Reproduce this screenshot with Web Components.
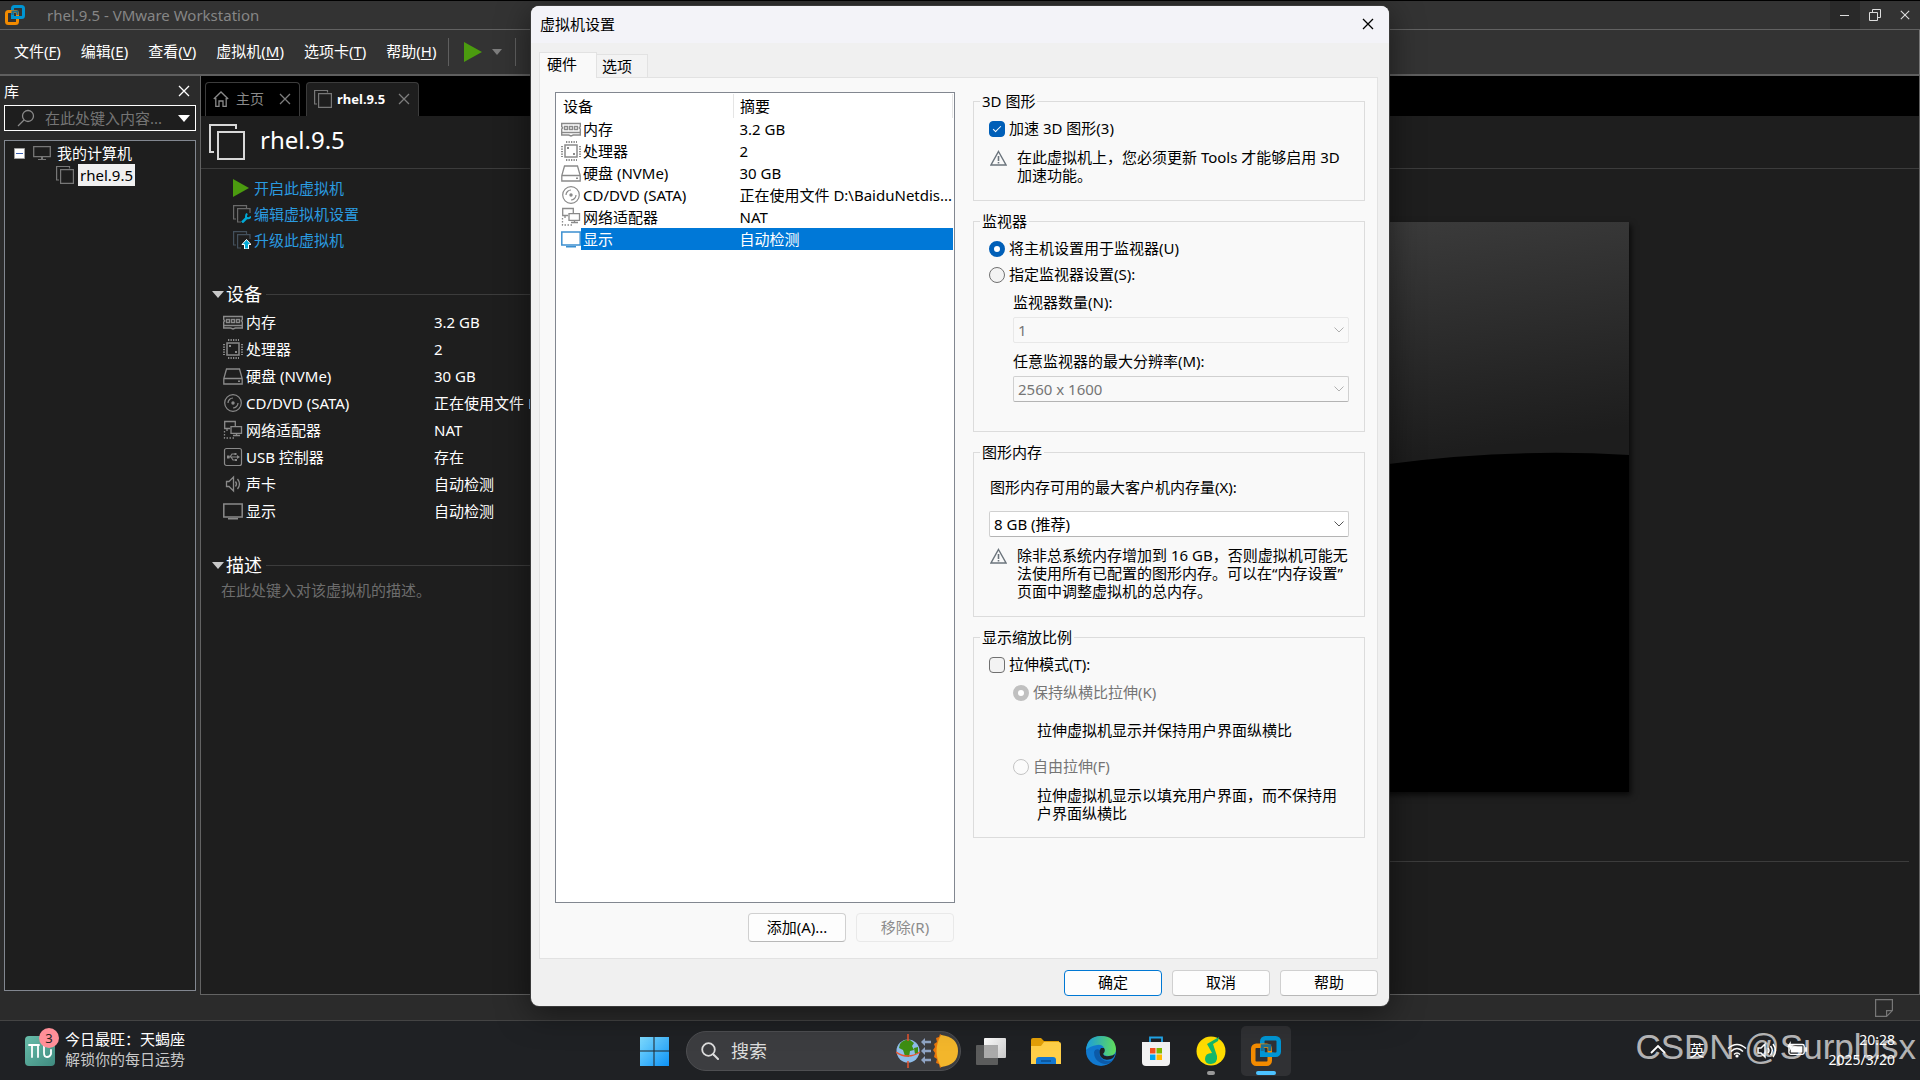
<!DOCTYPE html>
<html lang="zh-CN">
<head>
<meta charset="utf-8">
<title>rhel.9.5 - VMware Workstation</title>
<style>
    html, body {
        margin: 0;
        height: 100%;
    }
    body {
        background: #000;
        color: #fff;
        font: 15px/22px "Noto Sans", "Noto Sans CJK SC", sans-serif;
        overflow: hidden;
    }
</style>
</head>
<body>
<os-desktop>
    <wks-window slot="window"></wks-window>
    <settings-dialog slot="dialog"></settings-dialog>
    <os-taskbar slot="taskbar"></os-taskbar>
    <span slot="watermark">CSDN @Surplusx</span>
</os-desktop>

<script>
const define = (name, html) => {
    const template = document.createElement('template');
    template.innerHTML = html;
    customElements.define(name, class extends HTMLElement {
        constructor() {
            super();
            this.attachShadow({mode: 'open'}).appendChild(template.content.cloneNode(true));
        }
    });
};

// every icon is [viewBox, markup]
const icons = {
    logo: ['0 0 20 20', `<g fill="none" stroke-width="3">
        <rect x="7.5" y="1.5" width="11" height="11" rx="2" stroke="#0095d3"/>
        <rect x="1.5" y="6.5" width="11" height="12" rx="2" stroke="#f38b00"/>
        <path d="M7.500 9V12.500H15" stroke="#0095d3"/>
        <path d="M7.500 10V6.500H12.500V10" stroke="#1d6f93" stroke-width="2"/></g>`],
    memory: ['0 0 20 20', `<g fill="none" stroke="currentColor" stroke-width="1.400"><path d="M.7 4.500h18.600v3l-1 1.500 1 1v6h-7l-2.300 1-2.300-1h-7v-6l1-1-1-1.500z"/>
        <path d="M3.500 7.500h3v3h-3zM8.500 7.500h3v3h-3zM13.500 7.500h3v3h-3zM1 13.500h18"/></g>`],
    cpu: ['0 0 20 20', `<g fill="none" stroke="currentColor"><rect x="4" y="4" width="12" height="12" stroke-width="1.500"/>
        <path stroke-width="2" stroke-dasharray="1.300 1.200" d="M5 1h11M5 19h11M1 5v11M19 5v11"/></g><path fill="currentColor" d="M6 6h2v2H6zM12 12h2v2h-2z"/>`],
    disk: ['0 0 20 20', `<path fill="none" stroke="currentColor" stroke-width="1.300" d="M3.500 3h13l2.700 9.500V18H.8v-5.500zM1 12.500h18"/><path fill="currentColor" d="M15 14.500h2v1.500h-2z"/>`],
    disc: ['0 0 20 20', `<g fill="none" stroke="currentColor" stroke-width="1.200"><circle cx="10" cy="10" r="8.300"/>
        <path d="M5 10a5 5 0 0 1 5-5M15 10a5 5 0 0 1-5 5"/></g><circle cx="10" cy="10" r="1.700" fill="currentColor"/>`],
    network: ['0 0 20 20', `<g fill="none" stroke="currentColor" stroke-width="1.300"><path d="M7 8.500H1.700v-7h10.600V6M8 6.700h10.500v6.600H8zM10 15.500h7M13.500 13v3M4 8.500v2.500"/>
        <path stroke-dasharray="1.500 1.500" d="M1.500 11v7H12"/></g>`],
    usb: ['0 0 20 20', `<g fill="none" stroke="currentColor" stroke-width="1.200"><rect x="1.500" y="1.500" width="17" height="17" rx="2"/>
        <path d="M5 10h10M7 10l2-3h3M8 10l2 3h3"/></g><path fill="currentColor" d="M4 8.500h2.500v3H4zM14 8l3 2-3 2zM11.500 6h2v2h-2zM12 12h2v2h-2z"/>`],
    sound: ['0 0 20 20', `<path fill="none" stroke="currentColor" stroke-width="1.300" d="M3.500 7.500H6L10.500 3v14L6 12.500H3.500zM12.500 7.500q2 2.500 0 5M14.500 5q4 5 0 10"/>`],
    display: ['0 0 20 20', `<path fill="none" stroke="currentColor" stroke-width="1.500" d="M.8 3h18.400v13H.8z"/><path fill="currentColor" d="M5 17h10v1.500H5z"/>`],
    displayBlue: ['0 0 20 20', `<path fill="#fff" stroke="#3b8fd0" stroke-width="1.500" d="M.8 3h18.400v13H.8z"/><path fill="#3b8fd0" d="M5 17h10v1.500H5z"/>`],
    computer: ['0 0 18 18', `<path fill="none" stroke="currentColor" stroke-width="1.300" d="M.7 2.700h16.600v10H.7z"/><path fill="currentColor" d="M8 13h2v2h3v1H5v-1h3z"/>`],
    vm: ['0 0 18 18', `<path fill="none" stroke="currentColor" stroke-width="1.200" d="M13.500 2.500v-2H.6V14H3M4.600 3.600h12.800v13.800H4.600z"/>`],
    vmBig: ['0 0 36 36', `<path fill="none" stroke="#d8d8d8" stroke-width="2" d="M27 5V1H1v27h4M9 8h26v27H9z"/>`],
    vmEdit: ['0 0 18 18', `<path fill="none" stroke="#6a6a6a" stroke-width="1.200" d="M13.500 3V.6H.6V14H3M17 8V3.600H4.600V17H8"/>
        <path stroke="#00a9d6" stroke-width="2.500" d="m9 17.500 5-5"/><path fill="none" stroke="#00a9d6" stroke-width="2" d="M14 8.500q-2 3.500 0 4.500t4-1.500"/>`],
    vmUp: ['0 0 18 18', `<path fill="none" stroke="#43505c" stroke-width="1.200" d="M13.500 3V.6H.6V14H3M17 8V3.600H4.600V17H8"/>
        <path fill="#00a9d6" stroke="#fff" d="m13.500 8.500 4.500 5h-2.500V18h-4v-4.500H9z"/>`],
    play: ['0 0 18 20', `<path fill="#4b9b0f" d="M0 0l18 10L0 20z"/>`],
    down: ['0 0 12 7', `<path fill="currentColor" d="M0 0h12L6 7z"/>`],
    home: ['0 0 16 16', `<path fill="none" stroke="currentColor" stroke-width="1.300" d="M.8 8 8 1l7.200 7M2.800 7v8.300H6V10h4v5.300h3.200V7"/>`],
    close: ['0 0 12 12', `<path fill="none" stroke="currentColor" stroke-width="1.300" d="m1 1 10 10M11 1 1 11"/>`],
    minimize: ['0 0 12 12', `<path stroke="currentColor" d="M1 6.500h9"/>`],
    restore: ['0 0 12 12', `<path fill="none" stroke="currentColor" d="M3.500 3V.5h8v8H9M.5 3.500h8v8h-8z"/>`],
    search: ['0 0 18 18', `<circle cx="11" cy="7" r="5.500" fill="none" stroke="currentColor" stroke-width="1.300"/><path stroke="currentColor" stroke-width="1.300" d="M7 11l-6 6"/>`],
    searchWin: ['0 0 18 18', `<circle cx="7.500" cy="7.500" r="6.300" fill="none" stroke="currentColor" stroke-width="1.800"/><path stroke="currentColor" stroke-width="2" stroke-linecap="round" d="M12.500 12.500 17 17"/>`],
    minus: ['0 0 11 11', `<path fill="#fff" stroke="#a0a0a0" d="M.5.5h10v10H.5z"/><path stroke="#3a5fb0" d="M2 5.500h7"/>`],
    note: ['0 0 18 18', `<path fill="none" stroke="currentColor" stroke-width="1.200" d="M.6.6h16.800v11l-5.800 5.800H.6zM17 11.600h-5.400V17"/>`],
    warning: ['0 0 17 16', `<path fill="none" stroke="#6b747c" stroke-width="1.400" d="M8.500 1.500 16 15H1z"/><path fill="#6b747c" d="M7.700 6h1.600v5H7.700zM7.700 12h1.600v1.500H7.700z"/>`],
    chevron: ['0 0 10 6', `<path fill="none" stroke="currentColor" d="m.5.5 4.500 4.500L9.500.5"/>`],
    scorpio: ['0 0 30 30', `<defs><linearGradient id="s" x2="1" y2="1"><stop stop-color="#68bdaa"/><stop offset="1" stop-color="#3f8a7f"/></linearGradient></defs>
        <rect width="30" height="30" rx="4" fill="url(#s)"/><path fill="none" stroke="#fff" stroke-width="1.800" stroke-linecap="round" d="M4 9h10M7 9v12M13 9v12M19 10v7q0 4 3 4t4-3v-4"/>`],
    start: ['0 0 30 30', `<defs><linearGradient id="w" x2="1" y2="1"><stop stop-color="#7fdcff"/><stop offset="1" stop-color="#0d92f5"/></linearGradient></defs>
        <path fill="url(#w)" d="M1 1h13.500v13.500H1zM15.500 1H30v13.500H15.500zM1 15.500h13.500V30H1zM15.500 15.500H30V30H15.500z"/>`],
    globe: ['0 0 64 34', `<circle cx="12" cy="17" r="11.500" fill="#8fbdea"/><path fill="#3e8e12" d="M4 10Q8 5 14 6l4 3-2 3 2 4-4 1-1 6-4-1-2-6-4-2zM18 14l4-1v6l-3 1z"/>
        <path fill="none" stroke="#e8542f" stroke-width="1.500" d="M12 0v7M12 27v7M0 18q12 8 24 0"/><path stroke="#8fa4c4" stroke-width="2.500" d="M28 8h7M28 17h7M28 26h7"/>
        <path fill="#8fa4c4" d="m25 8 4-4v8zM25 17l4-4v8zM25 26l4-4v8z"/><path fill="#e8760c" d="m44 0 3 2v30l-3 2-1-4-3-1 1-4-3-2 1-4-2-3 2-3-1-3 3-2-1-4 3-1z"/>
        <path fill="#f3b62b" d="M45 1q17 2 17 16T45 33q-9-16 0-32z"/>`],
    taskview: ['0 0 30 30', `<defs><linearGradient id="t" x2="1" y2="1"><stop stop-color="#fff"/><stop offset="1" stop-color="#c8c8c8"/></linearGradient></defs>
        <rect x="8" y="2" width="22" height="20" rx="1" fill="url(#t)"/><rect y="9" width="22" height="20" rx="1" fill="#666" opacity=".85"/><path fill="#aaa" d="M8 9h14v13H8z"/>`],
    folder: ['0 0 30 30', `<path fill="#e3a008" d="M0 4q0-2 2-2h8l3 3h15v6H0z"/><path fill="#ffcf48" d="M0 10l10 0 3-4h15q2 0 2 2v20H0z"/><path fill="#1277d1" d="M5 28v-4q0-3 3-3h14q3 0 3 3v4z"/><path stroke="#0b4f91" stroke-width="1.500" d="M10 25h10"/>`],
    edge: ['0 0 30 30', `<defs><linearGradient id="e" x2="1"><stop stop-color="#1b9de2"/><stop offset="1" stop-color="#62e05a"/></linearGradient></defs>
        <circle cx="15" cy="15" r="15" fill="#1179cf"/><path fill="url(#e)" d="M0 14Q1 0 15 0t15 13q0 7-7 7-6 0-6-3 2-2 1-5-2-4-7-3Q4 10 0 14z"/>
        <path fill="#0c5aa8" d="M8 16q0 8 7 11 7 3 12-3-6 3-11-1-4-4-2-9-5-2-6 2z"/><path fill="#1f2124" d="M18 12q2 3-1 6 1 3 6 2 4 0 6-2-1 4-4 5-7 2-10-2-3-5 0-9z"/>`],
    store: ['0 0 30 30', `<path fill="none" stroke="#21a5e8" stroke-width="1.800" d="M9 7V1.500h12V7"/><path fill="#f2f2f2" d="M1 6h28v20q0 4-4 4H5q-4 0-4-4z"/>
        <path fill="#f25022" d="M9 12h5.500v5.500H9z"/><path fill="#7fba00" d="M15.500 12H21v5.500h-5.500z"/><path fill="#00a4ef" d="M9 18.500h5.500V24H9z"/><path fill="#ffb900" d="M15.500 18.500H21V24h-5.500z"/>`],
    music: ['0 0 30 30', `<circle cx="15" cy="15" r="14.500" fill="#ffdc00"/><path fill="#12b76a" d="m11 8 12-7-1 4-5 3 4 12q1 7-6 8-6 0-6-5 0-6 7-6z"/>`],
    arrowUp: ['0 0 20 20', `<path fill="none" stroke="currentColor" stroke-width="1.800" d="m3 13 7-7 7 7"/>`],
    wifi: ['0 0 20 20', `<g fill="none" stroke="currentColor" stroke-width="1.600"><path d="M1 8.500q9-8 18 0M4 11.500q6-6 12 0M7 14.500q3-3 6 0"/></g><circle cx="10" cy="16" r="1.600" fill="currentColor"/>`],
    volume: ['0 0 20 20', `<path fill="none" stroke="currentColor" stroke-width="1.500" d="M1 8h3l4-4v13l-4-4H1zM11 8q2 2.500 0 5M13.500 6q3.500 4.500 0 9M16 4q5 6.500 0 13"/>`],
    battery: ['0 0 22 20', `<rect x="2" y="5" width="17" height="11" rx="2" fill="none" stroke="currentColor" stroke-width="1.500"/><path fill="currentColor" d="M7 7h10v7H4v-4zM20 8h2v5h-2zM4 1 0 8h3l-1 5 5-7H4z"/>`],
};

customElements.define('os-icon', class extends HTMLElement {
    constructor() {
        super();
        this.attachShadow({mode: 'open'});
    }
    connectedCallback() {
        const [box, markup] = icons[this.getAttribute('name')];
        const [, , w, h] = box.split(' ');
        const width = this.getAttribute('width') || w;
        const height = Math.round(width * h / w);
        this.shadowRoot.innerHTML = `
            <style>
            :host { display: inline-flex; flex: none; }
            svg { display: block; }
            </style>
            <svg width="${width}" height="${height}" viewBox="${box}" aria-hidden="true">${markup}</svg>`;
    }
});

define('os-desktop', `
    <style>
    :host {
        display: flex;
        flex-direction: column;
        position: relative;
        min-height: 100vh;
    }
    slot[name="window"] {
        display: flex;
        flex: 1;
    }
    slot[name="dialog"] {
        display: flex;
        justify-content: center;
        position: absolute;
        top: 6px;
        left: 0;
        right: 0;
    }
    .watermark {
        position: absolute;
        right: 4px;
        bottom: 13px;
        color: rgba(255, 255, 255, .68);
        font: 35px/40px "Liberation Sans", sans-serif;
        pointer-events: none;
    }
    </style>
    <slot name="window"></slot>
    <slot name="taskbar"></slot>
    <slot name="dialog"></slot>
    <div class="watermark"><slot name="watermark"></slot></div>
`);

define('wks-window', `
    <style>
    :host {
        display: flex;
        flex-direction: column;
        flex: 1;
        border-top: 1px solid #000;
        background: #2b2b2b;
    }
    .body {
        display: flex;
        flex: 1;
    }
    .status {
        display: flex;
        justify-content: flex-end;
        align-items: center;
        height: 25px;
        padding-right: 27px;
        color: #777;
    }
    </style>
    <wks-title></wks-title>
    <wks-menu></wks-menu>
    <div class="body">
        <wks-library></wks-library>
        <wks-workspace></wks-workspace>
    </div>
    <div class="status"><os-icon name="note"></os-icon></div>
`);

define('wks-title', `
    <style>
    :host {
        display: flex;
        align-items: center;
        height: 28px;
        background: #333;
        border-bottom: 1px solid #626262;
        color: #868686;
    }
    os-icon[name="logo"] { margin: 0 22px 0 5px; }
    .buttons {
        display: flex;
        align-self: stretch;
        margin-left: auto;
    }
    button {
        display: grid;
        place-items: center;
        width: 30px;
        padding: 0;
        border: 0;
        background: none;
        color: #ddd;
    }
    button:first-child { background: #292929; }
    </style>
    <os-icon name="logo"></os-icon>
    <span>rhel.9.5 - VMware Workstation</span>
    <div class="buttons">
        <button aria-label="最小化"><os-icon name="minimize"></os-icon></button>
        <button aria-label="还原"><os-icon name="restore"></os-icon></button>
        <button aria-label="关闭"><os-icon name="close" width="10"></os-icon></button>
    </div>
`);

define('wks-menu', `
    <style>
    :host {
        display: flex;
        align-items: center;
        height: 44px;
        background: #333;
        border-bottom: 2px solid #5f5f5f;
        border-right: 1px solid #777;
    }
    nav {
        display: flex;
        gap: 20px;
        padding: 0 12px 0 14px;
    }
    button {
        padding: 0;
        border: 0;
        background: none;
        color: #fff;
        font: inherit;
    }
    nav button { padding-bottom: 3px; }
    u { text-underline-offset: 2px; }
    .tools {
        display: flex;
        align-items: center;
        gap: 10px;
        height: 28px;
        padding: 0 13px 0 15px;
        border-left: 1px solid #5f5f5f;
        border-right: 1px solid #5f5f5f;
        color: #7d7d7d;
    }
    .tools button { color: #7d7d7d; display: flex; }
    </style>
    <nav>
        <button>文件(<u>F</u>)</button>
        <button>编辑(<u>E</u>)</button>
        <button>查看(<u>V</u>)</button>
        <button>虚拟机(<u>M</u>)</button>
        <button>选项卡(<u>T</u>)</button>
        <button>帮助(<u>H</u>)</button>
    </nav>
    <div class="tools">
        <button aria-label="开启"><os-icon name="play"></os-icon></button>
        <button aria-label="电源选项"><os-icon name="down" width="10"></os-icon></button>
    </div>
`);

define('wks-library', `
    <style>
    :host {
        display: flex;
        flex-direction: column;
        width: 192px;
        padding: 0 4px 4px;
    }
    header {
        display: flex;
        align-items: center;
        justify-content: space-between;
        height: 29px;
        padding-right: 6px;
    }
    button {
        display: flex;
        padding: 0;
        border: 0;
        background: none;
        color: #fff;
    }
    .search {
        display: flex;
        align-items: center;
        height: 24px;
        padding: 0 5px 0 12px;
        border: 1px solid #fff;
        background: #1e1e1e;
        color: #8a8a8a;
    }
    input {
        flex: 1;
        min-width: 0;
        margin-left: 10px;
        padding: 0;
        border: 0;
        outline: 0;
        background: none;
        color: #fff;
        font: inherit;
    }
    input::placeholder { color: #757575; opacity: 1; }
    .tree {
        flex: 1;
        margin-top: 9px;
        padding: 1px 9px;
        border: 1px solid #828790;
        background: #1e1e1e;
        color: #777;
    }
    .row {
        display: flex;
        align-items: center;
        height: 22px;
    }
    .row span { color: #fff; }
    .root os-icon + os-icon { margin: 0 6px 0 8px; }
    .child { padding-left: 42px; gap: 4px; }
    .child span {
        padding: 0 2px;
        background: #f0f0f0;
        color: #000;
    }
    </style>
    <header>库<button aria-label="关闭库"><os-icon name="close"></os-icon></button></header>
    <div class="search">
        <os-icon name="search"></os-icon>
        <input type="text" aria-label="搜索库" placeholder="在此处键入内容...">
        <button aria-label="搜索选项"><os-icon name="down"></os-icon></button>
    </div>
    <div class="tree">
        <div class="row root"><os-icon name="minus"></os-icon><os-icon name="computer"></os-icon><span>我的计算机</span></div>
        <div class="row child"><os-icon name="vm"></os-icon><span>rhel.9.5</span></div>
    </div>
`);

define('wks-tab', `
    <style>
    :host {
        display: flex;
        align-items: center;
        gap: 7px;
        box-sizing: border-box;
        height: 34px;
        padding: 0 8px 2px 7px;
        border: 1px solid #3c3c3c;
        border-bottom: 0;
        border-radius: 4px 4px 0 0;
        color: #8a8a8a;
        font-size: 14px;
    }
    :host([selected]) {
        gap: 5px;
        background: #1e1e1e;
        color: #777;
    }
    :host([selected]) span {
        color: #fff;
        font-size: 13px;
        font-weight: bold;
    }
    button {
        display: flex;
        margin-left: 8px;
        padding: 0;
        border: 0;
        background: none;
        color: #7d7d7d;
    }
    </style>
    <slot name="icon"></slot>
    <span><slot></slot></span>
    <button aria-label="关闭标签页"><os-icon name="close"></os-icon></button>
`);

define('wks-workspace', `
    <style>
    :host {
        display: flex;
        flex-direction: column;
        flex: 1;
        min-width: 0;
        border: 1px solid #636363;
        border-top: 0;
        background: #1e1e1e;
    }
    .tabs {
        display: flex;
        align-items: flex-end;
        gap: 6px;
        height: 40px;
        padding-left: 4px;
        background: #000;
    }
    h1 {
        display: flex;
        align-items: center;
        gap: 15px;
        height: 52px;
        margin: 0;
        padding-left: 8px;
        border-bottom: 1px solid #3c3c3c;
        font-size: 24px;
        font-weight: normal;
    }
    h1 span { padding-bottom: 5px; }
    .content {
        display: flex;
        flex: 1;
    }
    .details {
        width: 480px;
        padding-left: 11px;
    }
    .console {
        flex: 1;
        padding: 53px 10px 0 0;
    }
    .console svg {
        display: block;
        margin: 0 280px 69px auto;
        box-shadow: 2px 3px 6px rgba(0, 0, 0, .7);
    }
    hr {
        height: 1px;
        margin: 0;
        border: 0;
        background: #3c3c3c;
    }
    .links {
        display: grid;
        padding: 6px 0 0 21px;
    }
    a {
        display: flex;
        align-items: center;
        gap: 3px;
        height: 26px;
        color: #2a9be0;
        text-decoration: none;
    }
    a os-icon { width: 18px; }
    h2 {
        display: flex;
        align-items: center;
        height: 26px;
        margin: 0;
        color: #c8c8c8;
        font-size: 18px;
        font-weight: normal;
    }
    h2 span { margin: 0 4px 0 2px; color: #fff; }
    h2 hr { flex: 1; }
    .devices,
    .about { margin-top: 28px; }
    table {
        margin: 1px 0 0 11px;
        border-collapse: collapse;
    }
    td {
        height: 27px;
        padding: 0;
        white-space: nowrap;
    }
    td:first-child { width: 211px; }
    td div {
        display: flex;
        align-items: center;
        gap: 3px;
    }
    td os-icon { color: #8a8a8a; }
    p {
        margin: 1px 0 0 9px;
        color: #6d6d6d;
    }
    </style>
    <div class="tabs">
        <wks-tab><os-icon slot="icon" name="home"></os-icon>主页</wks-tab>
        <wks-tab selected><os-icon slot="icon" name="vm"></os-icon>rhel.9.5</wks-tab>
    </div>
    <h1><os-icon name="vmBig"></os-icon><span>rhel.9.5</span></h1>
    <div class="content">
        <div class="details">
            <div class="links">
                <a href="#"><os-icon name="play" width="16"></os-icon>开启此虚拟机</a>
                <a href="#"><os-icon name="vmEdit"></os-icon>编辑虚拟机设置</a>
                <a href="#"><os-icon name="vmUp"></os-icon>升级此虚拟机</a>
            </div>
            <h2 class="devices"><os-icon name="down"></os-icon><span>设备</span><hr></h2>
            <table>
                <tr><td><div><os-icon name="memory"></os-icon>内存</div></td><td>3.2 GB</td></tr>
                <tr><td><div><os-icon name="cpu"></os-icon>处理器</div></td><td>2</td></tr>
                <tr><td><div><os-icon name="disk"></os-icon>硬盘 (NVMe)</div></td><td>30 GB</td></tr>
                <tr><td><div><os-icon name="disc"></os-icon>CD/DVD (SATA)</div></td><td>正在使用文件 D:\\BaiduNetdis...</td></tr>
                <tr><td><div><os-icon name="network"></os-icon>网络适配器</div></td><td>NAT</td></tr>
                <tr><td><div><os-icon name="usb"></os-icon>USB 控制器</div></td><td>存在</td></tr>
                <tr><td><div><os-icon name="sound"></os-icon>声卡</div></td><td>自动检测</td></tr>
                <tr><td><div><os-icon name="display"></os-icon>显示</div></td><td>自动检测</td></tr>
            </table>
            <h2 class="about"><os-icon name="down"></os-icon><span>描述</span><hr></h2>
            <p>在此处键入对该虚拟机的描述。</p>
        </div>
        <div class="console">
            <svg width="760" height="570" viewBox="0 0 760 570" aria-hidden="true">
                <defs>
                    <linearGradient id="glare" x1=".6" y1="0" x2=".68" y2=".42">
                        <stop stop-color="#3c3c3c"/>
                        <stop offset="1" stop-color="#1d1d1d"/>
                    </linearGradient>
                </defs>
                <rect width="760" height="570" fill="url(#glare)"/>
                <path d="M0 330Q300 265 520 242Q640 226 760 233V570H0z"/>
            </svg>
            <hr>
        </div>
    </div>
`);

define('group-box', `
    <style>
    :host { display: block; }
    fieldset {
        margin: 0;
        padding: 0;
        border: 1px solid #dcdcdc;
    }
    legend {
        margin-left: 6px;
        padding: 0 2px;
        line-height: 18px;
    }
    .body { padding: 8px 15px 15px; }
    </style>
    <fieldset>
        <legend><slot name="legend"></slot></legend>
        <div class="body"><slot></slot></div>
    </fieldset>
`);

define('settings-dialog', `
    <style>
    :host {
        display: block;
        width: 858px;
        border-radius: 8px;
        background: #f0f0f0;
        box-shadow: 0 0 0 1px #3a3a3a, 0 6px 32px rgba(0, 0, 0, .5);
        color: #000;
        overflow: hidden;
    }
    header {
        display: flex;
        align-items: center;
        justify-content: space-between;
        box-sizing: border-box;
        height: 37px;
        padding: 0 15px 2px 9px;
        background: #f3f3f8;
    }
    header button {
        display: flex;
        padding: 0;
        border: 0;
        background: none;
    }
    .main { padding: 9px 11px 10px 8px; }
    .tabs {
        display: flex;
        align-items: flex-end;
        height: 25px;
    }
    .tabs button {
        box-sizing: border-box;
        height: 23px;
        padding: 0 15px 0 5px;
        border: 1px solid #e2e2e2;
        border-left: 0;
        border-bottom: 0;
        background: #f3f3f3;
        color: #000;
        font: inherit;
    }
    .tabs button[aria-selected="true"] {
        height: 26px;
        padding: 0 19px 4px 7px;
        margin-bottom: -1px;
        border-left: 1px solid #e2e2e2;
        background: #f9f9f9;
        z-index: 1;
    }
    .pane {
        display: grid;
        grid-template-columns: 400px 1fr;
        gap: 18px;
        padding: 14px 12px 16px 15px;
        border: 1px solid #e2e2e2;
        background: #f9f9f9;
    }
    .hardware {
        display: flex;
        flex-direction: column;
        gap: 10px;
    }
    .list {
        flex: 1;
        min-height: 807px;
        padding: 1px;
        border: 1px solid #828790;
        background: #fff;
    }
    table {
        width: 100%;
        border-collapse: collapse;
        table-layout: fixed;
    }
    th {
        height: 24px;
        padding: 0 0 0 6px;
        border-right: 1px solid #e5e5e5;
        font-weight: normal;
        text-align: left;
    }
    th:first-child { width: 170px; }
    td {
        height: 22px;
        padding: 0 0 0 6px;
        overflow: hidden;
        white-space: nowrap;
    }
    td:first-child { padding: 0 0 0 4px; }
    td div { display: flex; align-items: center; }
    td os-icon { color: #8a8a8a; }
    td span {
        flex: 1;
        padding-left: 2px;
    }
    .selected span,
    .selected td + td {
        background: #0078d7;
        color: #fff;
    }
    .actions {
        display: flex;
        justify-content: flex-end;
        gap: 10px;
        padding-right: 1px;
    }
    .actions button,
    footer button {
        width: 98px;
        height: 29px;
        padding: 0 0 2px;
        border: 1px solid #d0d0d0;
        border-bottom-color: #b8b8b8;
        border-radius: 4px;
        background: #fdfdfd;
        color: #000;
        font: inherit;
    }
    .actions button:disabled {
        border-color: #e9e9e9;
        background: #f9f9f9;
        color: #8c8c8c;
    }
    footer {
        display: flex;
        justify-content: flex-end;
        gap: 10px;
        margin-top: 11px;
    }
    footer button { height: 26px; }
    footer .default { border-color: #0078d4; }
    .groups {
        display: flex;
        flex-direction: column;
        gap: 11px;
    }
    .field {
        display: flex;
        align-items: center;
        gap: 4px;
        height: 22px;
    }
    .field label { padding-bottom: 2px; }
    input {
        appearance: none;
        box-sizing: border-box;
        width: 16px;
        height: 16px;
        margin: 0;
        border: 1px solid #707070;
        background: #f3f3f3;
    }
    input[type="checkbox"] {
        display: grid;
        place-items: center;
        border-radius: 4px;
    }
    input[type="checkbox"]:checked {
        border-color: #005fb8;
        background: #005fb8;
    }
    input[type="checkbox"]:checked::before {
        content: "";
        width: 7px;
        height: 3px;
        margin-bottom: 3px;
        border: solid #fff;
        border-width: 0 0 1px 1px;
        transform: rotate(-45deg);
    }
    input[type="radio"] { border-radius: 50%; }
    input[type="radio"]:checked {
        border: 5px solid #005fb8;
        background: #fff;
    }
    input:disabled { border-color: #c4c4c4; background: #fbfbfb; }
    input[type="radio"]:disabled:checked { border-color: #c0c0c0; }
    input:disabled + label { color: #757575; }
    .note {
        display: flex;
        gap: 10px;
        padding-left: 1px;
        line-height: 18px;
        white-space: nowrap;
    }
    .note os-icon { padding-top: 2px; }
    .monitor .field + .field,
    .caption + .combo { margin-top: 4px; }
    .caption {
        display: block;
        padding-left: 1px;
    }
    .combo {
        display: grid;
        align-items: center;
        justify-items: end;
        color: #555;
    }
    .combo > * { grid-area: 1 / 1; }
    .combo os-icon { margin-right: 5px; }
    select:disabled + os-icon { color: #b0b0b0; }
    select {
        appearance: none;
        width: 100%;
        height: 26px;
        padding: 0 4px 1px;
        border: 1px solid #d0d0d0;
        border-bottom-color: #b4b4b4;
        border-radius: 2px;
        background: #fff;
        color: #000;
        font: inherit;
    }
    select:disabled { color: #757575; opacity: 1; background: #f9f9f9; }
    select.flat { border-color: #e8e8e8; }
    .sub {
        padding: 5px 0 14px 24px;
    }
    .sub .caption { padding: 0; }
    .sub .combo + .caption { margin-top: 7px; }
    .acceleration .note { margin-top: 8px; padding-bottom: 1px; }
    .memory .caption { margin-top: 7px; }
    .memory .combo { margin-top: 13px; }
    .memory .note { margin-top: 9px; padding-bottom: 1px; }
    .scaling .option { margin: 6px 0 0 24px; }
    .scaling p {
        margin: 17px 0 17px 48px;
        line-height: 18px;
        white-space: nowrap;
    }
    .scaling p:last-child { margin: 8px 0 0 48px; }
    </style>
    <header>虚拟机设置<button aria-label="关闭"><os-icon name="close" width="12"></os-icon></button></header>
    <div class="main">
        <div class="tabs" role="tablist">
            <button role="tab" aria-selected="true">硬件</button>
            <button role="tab" aria-selected="false">选项</button>
        </div>
        <div class="pane">
            <div class="hardware">
                <div class="list">
                    <table>
                        <tr><th>设备</th><th>摘要</th></tr>
                        <tr><td><div><os-icon name="memory"></os-icon><span>内存</span></div></td><td>3.2 GB</td></tr>
                        <tr><td><div><os-icon name="cpu"></os-icon><span>处理器</span></div></td><td>2</td></tr>
                        <tr><td><div><os-icon name="disk"></os-icon><span>硬盘 (NVMe)</span></div></td><td>30 GB</td></tr>
                        <tr><td><div><os-icon name="disc"></os-icon><span>CD/DVD (SATA)</span></div></td><td>正在使用文件 D:\\BaiduNetdis...</td></tr>
                        <tr><td><div><os-icon name="network"></os-icon><span>网络适配器</span></div></td><td>NAT</td></tr>
                        <tr class="selected"><td><div><os-icon name="displayBlue"></os-icon><span>显示</span></div></td><td>自动检测</td></tr>
                    </table>
                </div>
                <div class="actions">
                    <button>添加(A)...</button>
                    <button disabled>移除(R)</button>
                </div>
            </div>
            <div class="groups">
                <group-box class="acceleration">
                    <span slot="legend">3D 图形</span>
                    <div class="field"><input type="checkbox" id="accelerate" checked><label for="accelerate">加速 3D 图形(3)</label></div>
                    <div class="note"><os-icon name="warning"></os-icon><span>在此虚拟机上，您必须更新 Tools 才能够启用 3D<br>加速功能。</span></div>
                </group-box>
                <group-box class="monitor">
                    <span slot="legend">监视器</span>
                    <div class="field"><input type="radio" name="monitor" id="host" checked><label for="host">将主机设置用于监视器(U)</label></div>
                    <div class="field"><input type="radio" name="monitor" id="custom"><label for="custom">指定监视器设置(S):</label></div>
                    <div class="sub">
                        <label class="caption" for="count">监视器数量(N):</label>
                        <div class="combo"><select class="flat" id="count" disabled><option>1</option></select><os-icon name="chevron"></os-icon></div>
                        <label class="caption" for="resolution">任意监视器的最大分辨率(M):</label>
                        <div class="combo"><select id="resolution" disabled><option>2560 x 1600</option></select><os-icon name="chevron"></os-icon></div>
                    </div>
                </group-box>
                <group-box class="memory">
                    <span slot="legend">图形内存</span>
                    <label class="caption" for="vram">图形内存可用的最大客户机内存量(X):</label>
                    <div class="combo"><select id="vram"><option>8 GB (推荐)</option></select><os-icon name="chevron"></os-icon></div>
                    <div class="note"><os-icon name="warning"></os-icon><span>除非总系统内存增加到 16 GB，否则虚拟机可能无<br>法使用所有已配置的图形内存。可以在“内存设置”<br>页面中调整虚拟机的总内存。</span></div>
                </group-box>
                <group-box class="scaling">
                    <span slot="legend">显示缩放比例</span>
                    <div class="field"><input type="checkbox" id="stretch"><label for="stretch">拉伸模式(T):</label></div>
                    <div class="field option"><input type="radio" name="scale" id="keep" checked disabled><label for="keep">保持纵横比拉伸(K)</label></div>
                    <p>拉伸虚拟机显示并保持用户界面纵横比</p>
                    <div class="field option"><input type="radio" name="scale" id="free" disabled><label for="free">自由拉伸(F)</label></div>
                    <p>拉伸虚拟机显示以填充用户界面，而不保持用<br>户界面纵横比</p>
                </group-box>
            </div>
        </div>
        <footer>
            <button class="default">确定</button>
            <button>取消</button>
            <button>帮助</button>
        </footer>
    </div>
`);

define('os-taskbar', `
    <style>
    :host {
        display: grid;
        grid-template-columns: 1fr auto 1fr;
        align-items: center;
        height: 59px;
        border-top: 1px solid #444;
        background: #1f2124;
    }
    button {
        padding: 0;
        border: 0;
        background: none;
        color: #fff;
        font: inherit;
    }
    .widget {
        display: flex;
        align-items: center;
        gap: 10px;
        padding-left: 25px;
        line-height: 20px;
        text-align: left;
        position: relative;
    }
    .widget span { padding-bottom: 3px; }
    .widget small {
        display: block;
        color: #c8c8c8;
        font-size: 15px;
    }
    .widget .badge {
        position: absolute;
        left: 39px;
        top: -1px;
        width: 20px;
        padding: 0;
        border-radius: 50%;
        background: #ff8f98;
        color: #222;
        font-size: 13px;
        text-align: center;
    }
    .apps {
        display: flex;
        align-items: center;
        gap: 5px;
    }
    .app {
        display: grid;
        place-items: center;
        position: relative;
        width: 50px;
        height: 50px;
        border-radius: 5px;
    }
    .app.active { background: #303134; }
    .app.running::after {
        content: "";
        position: absolute;
        bottom: 1px;
        width: 8px;
        height: 4px;
        border-radius: 2px;
        background: #999;
    }
    .app.active::after {
        width: 20px;
        background: #4cc2ff;
    }
    .search {
        display: flex;
        align-items: center;
        box-sizing: border-box;
        width: 275px;
        height: 40px;
        margin-left: 2px;
        padding: 0 0 0 14px;
        border: 1px solid #4e4f52;
        border-radius: 20px;
        background: #3c3d40;
        color: #ddd;
        font-size: 18px;
    }
    .search span { margin: 0 auto 0 12px; }
    .tray {
        display: flex;
        align-items: center;
        justify-content: flex-end;
        gap: 22px;
        padding-right: 25px;
    }
    .tray os-icon, .tray > span, time { padding-bottom: 2px; }
    .system {
        display: flex;
        gap: 10px;
    }
    time {
        font-size: 14px;
        line-height: 20px;
        text-align: right;
    }
    </style>
    <button class="widget">
        <os-icon name="scorpio"></os-icon>
        <span>今日最旺：天蝎座<small>解锁你的每日运势</small></span>
        <span class="badge">3</span>
    </button>
    <div class="apps">
        <button class="app" aria-label="开始"><os-icon name="start"></os-icon></button>
        <button class="search"><os-icon name="searchWin"></os-icon><span>搜索</span><os-icon name="globe"></os-icon></button>
        <button class="app" aria-label="任务视图"><os-icon name="taskview"></os-icon></button>
        <button class="app" aria-label="文件资源管理器"><os-icon name="folder"></os-icon></button>
        <button class="app" aria-label="Edge"><os-icon name="edge"></os-icon></button>
        <button class="app" aria-label="商店"><os-icon name="store"></os-icon></button>
        <button class="app running" aria-label="音乐"><os-icon name="music"></os-icon></button>
        <button class="app running active" aria-label="VMware"><os-icon name="logo" width="30"></os-icon></button>
    </div>
    <div class="tray">
        <os-icon name="arrowUp"></os-icon>
        <span>英</span>
        <div class="system">
            <os-icon name="wifi"></os-icon>
            <os-icon name="volume"></os-icon>
            <os-icon name="battery" width="20"></os-icon>
        </div>
        <time>20:28<br>2025/3/20</time>
    </div>
`);
</script>
</body>
</html>
